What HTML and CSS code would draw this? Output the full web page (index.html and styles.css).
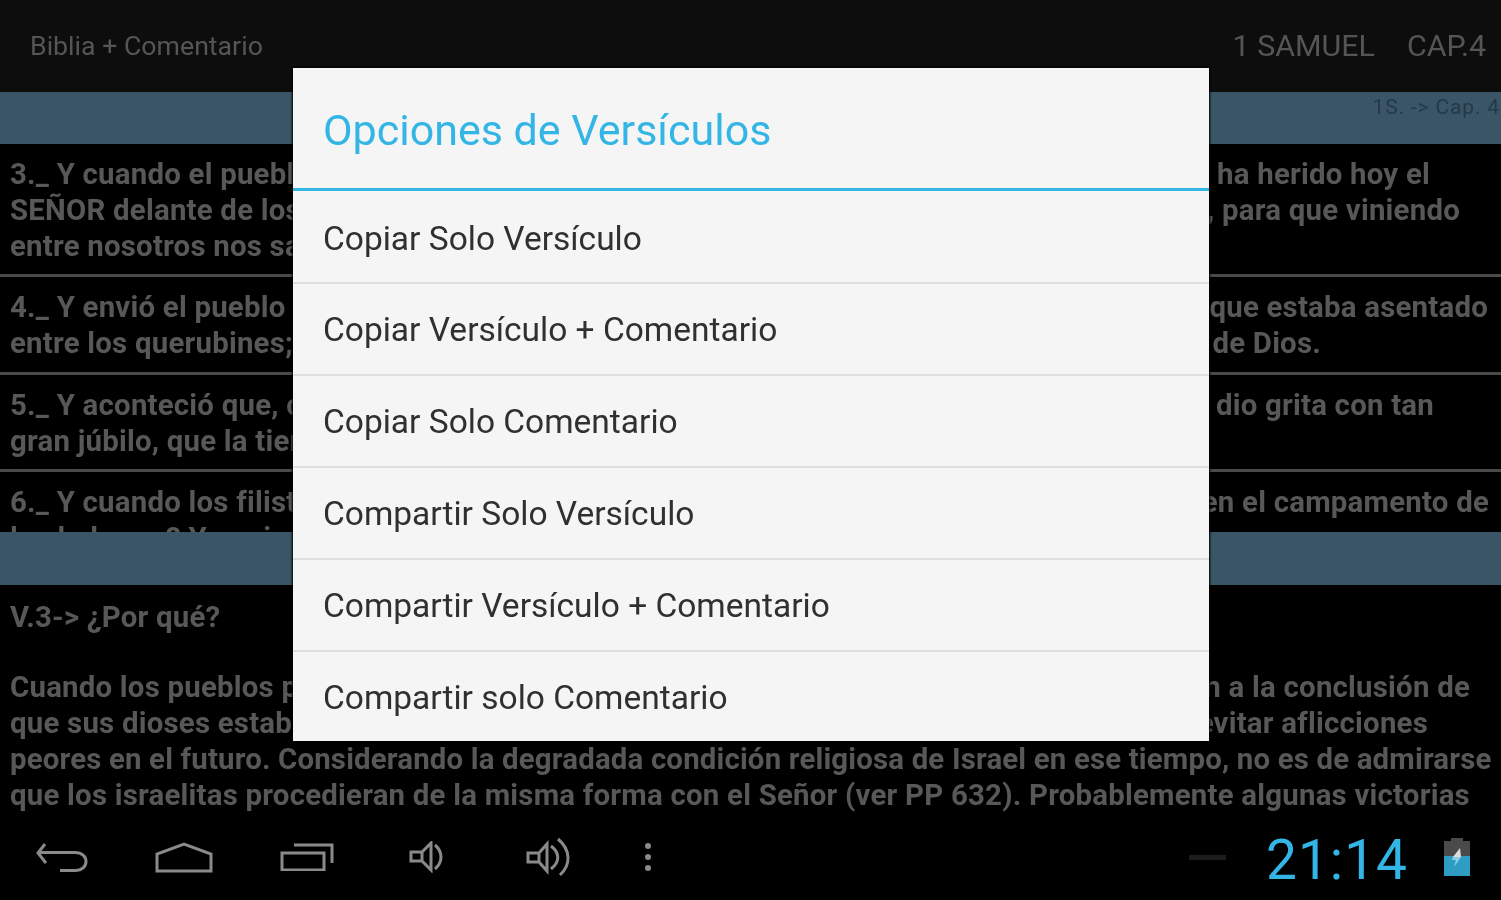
FILE: index.html
```html
<!DOCTYPE html>
<html lang="es">
<head>
<meta charset="utf-8">
<title>Biblia + Comentario</title>
<link rel="stylesheet" href="styles.css">
</head>
<body>
<div class="screen">
  <main class="app">
    <header class="topbar">
      <span class="app-title">Biblia + Comentario</span>
      <span class="book"><span>1 SAMUEL</span><span>CAP.4</span></span>
    </header>
    <div class="band band-top"><span class="band-ref">1S. -&gt; Cap. 4</span></div>
    <section class="verses">
      <article class="verse verse-3">
        <p class="line"><span>3._ Y cuando el pueblo volvió al campamento, los ancianos de Israel dijeron:</span><span>¿Por qué nos ha herido hoy el</span></p>
        <p class="line"><span>SEÑOR delante de los filisteos? Traigamos a nosotros de Silo el arca</span><span>del pacto, para que viniendo</span></p>
        <p class="line"><span>entre nosotros nos salve de la mano de nuestros enemigos.</span></p>
      </article>
      <article class="verse verse-4">
        <p class="line"><span>4._ Y envió el pueblo a Silo, y trajeron de allá el arca del pacto de Jehová</span><span>que estaba asentado</span></p>
        <p class="line"><span>entre los querubines; y los dos hijos de Elí estaban allí con el arca del pacto</span><span>de Dios.</span></p>
      </article>
      <article class="verse verse-5">
        <p class="line"><span>5._ Y aconteció que, cuando el arca del pacto llegó al campamento, todo Israel</span><span>dio grita con tan</span></p>
        <p class="line"><span>gran júbilo, que la tierra tembló.</span></p>
      </article>
      <article class="verse verse-6">
        <p class="line"><span>6._ Y cuando los filisteos oyeron la voz de júbilo, dijeron: ¿Qué voz de júbilo es esta</span><span>en el campamento de</span></p>
        <p class="line"><span>los hebreos? Y supieron que el arca de Jehová había venido al campamento.</span></p>
      </article>
    </section>
    <div class="band"></div>
    <section class="commentary">
      <p class="line comment-head"><span>V.3-&gt; ¿Por qué?</span></p>
      <p class="line"><span>Cuando los pueblos paganos sufrían una derrota, generalmente</span><span>llegaban a la conclusión de</span></p>
      <p class="line"><span>que sus dioses estaban enojados con ellos, y procuraban aplacarlos para</span><span>evitar aflicciones</span></p>
      <p class="line line-tight"><span>peores en el futuro. Considerando la degradada condición religiosa de Israel en ese tiempo, no es de admirarse</span></p>
      <p class="line"><span>que los israelitas procedieran de la misma forma con el Señor (ver PP 632). Probablemente algunas victorias</span></p>
    </section>
  </main>

  <nav class="navbar">
    <div class="nav-icons">
      <svg class="ico ico-back" viewBox="0 0 52 30"><path d="M9 2 2 11l8 10M2 10.500h37c7 0 11 4 11 9s-4 9-11 9H24"/></svg>
      <svg class="ico ico-home" viewBox="0 0 58 31"><path d="M2 29V12L29 2l27 10v17z"/></svg>
      <svg class="ico ico-recent" viewBox="0 0 54 28"><path d="M2 10h42v17H2zM14 2h38v18"/></svg>
      <svg class="ico ico-vol1" viewBox="0 0 36 32"><path d="M2 11h11l9-9v27l-9-9H2zM13 11v9M26 4c8 7 8 17 0 24"/></svg>
      <svg class="ico ico-vol2" viewBox="0 0 46 40"><path d="M2 16h11l8-9v27l-8-9H2zM13 16v9M25 9c9 7 9 16 0 23M32 2c13 11 13 26 2 36"/></svg>
      <span class="dots"><i></i><i></i><i></i></span>
    </div>
    <div class="status">
      <span class="dash"></span>
      <span class="clock">21:14</span>
      <svg class="battery" viewBox="0 0 26 38">
        <path class="bat-top" d="M7 0h12v3h7v15H0V3h7z"/>
        <path class="bat-fill" d="M0 18h26v20H0z"/>
        <path class="bat-bolt" d="M16 10 9 19h8z"/>
        <path class="bat-bolt-low" d="M9 19h8l-7 10 2-7H8z"/>
      </svg>
    </div>
  </nav>

  <div class="dialog" role="dialog">
    <h1 class="dialog-title">Opciones de Versículos</h1>
    <ul class="options">
      <li>Copiar Solo Versículo</li>
      <li>Copiar Versículo + Comentario</li>
      <li>Copiar Solo Comentario</li>
      <li>Compartir Solo Versículo</li>
      <li>Compartir Versículo + Comentario</li>
      <li>Compartir solo Comentario</li>
    </ul>
  </div>
</div>
</body>
</html>
```
FILE: styles.css
```css
* { box-sizing: border-box; }
html, body { margin: 0; padding: 0; background: #000; }
.screen {
  position: relative;
  width: 1501px;
  height: 900px;
  overflow: hidden;
  background: #000;
  font-family: Roboto, "Liberation Sans", sans-serif;
  filter: blur(0.7px);
  display: flex;
  flex-direction: column;
}
.app { height: 820px; overflow: hidden; flex: none; }
.topbar {
  height: 92px;
  background: #0d0d0d;
  display: flex;
  justify-content: space-between;
  align-items: center;
  padding: 0 15px 1px 30px;
  color: #555;
}
.app-title { font-size: 26.7px; }
.book { display: flex; gap: 32px; font-size: 30.4px; }
.band { height: 53px; background: #3a5565; }
.band-top { height: 52px; display: flex; justify-content: flex-end; }
.band-ref { font-size: 21px; color: #24394a; margin-top: 3px; margin-right: 1px; letter-spacing: 0.85px; white-space: nowrap; }
.verses { height: 388px; overflow: hidden; }
.verse { padding: 12px 10px 10px; border-bottom: 3px solid #4a4a4a; }
.verse-4 { padding-bottom: 11px; }
.line {
  margin: 0;
  height: 36px;
  line-height: 36px;
  font-size: 29.4px;
  letter-spacing: 0.22px;
  font-weight: 700;
  color: #585858;
  white-space: nowrap;
  display: flex;
  justify-content: space-between;
}
.line-tight { letter-spacing: 0.17px; }
.verse-3 .line:nth-child(1) { padding-right: 61px; }
.verse-3 .line:nth-child(2) { padding-right: 31px; }
.verse-4 .line:nth-child(1) { padding-right: 3px; }
.verse-4 .line:nth-child(2) { padding-right: 170px; }
.verse-5 .line:nth-child(1) { padding-right: 57px; }
.verse-6 .line:nth-child(1) { padding-right: 2px; }
.commentary { padding: 14px 10px 0; }
.commentary .line:nth-child(2) { padding-right: 21px; }
.commentary .line:nth-child(3) { padding-right: 63px; }
.comment-head { margin-bottom: 34px; }

.navbar {
  height: 80px;
  flex: none;
  display: flex;
  justify-content: space-between;
  align-items: center;
  background: #000;
  padding: 0 31px 6px 36px;
}
.nav-icons { display: flex; align-items: center; }
.ico { fill: none; stroke: #8a8a8a; stroke-width: 3; display: block; flex: none; }
.ico-back { width: 52px; height: 30px; margin-right: 67px; }
.ico-home { width: 58px; height: 31px; margin-right: 67px; }
.ico-recent { width: 54px; height: 28px; margin-right: 75px; }
.ico-vol1 { width: 36px; height: 32px; margin-right: 81px; }
.ico-vol2 { width: 46px; height: 40px; margin-right: 73px; }
.dots { display: flex; flex-direction: column; gap: 5px; }
.dots i { display: block; width: 6px; height: 6px; border-radius: 50%; background: #8a8a8a; }
.status { display: flex; align-items: center; }
.dash { width: 37px; height: 5px; background: #1c1c1c; margin-right: 40px; }
.clock { font-size: 55px; color: #33b5e5; margin-right: 36px; line-height: 1; letter-spacing: 1px; margin-top: 6px; }
.battery { width: 26px; height: 38px; }
.bat-top { fill: #4a4a4a; }
.bat-fill { fill: #2f9cc4; }
.bat-bolt { fill: #ddd; }
.bat-bolt-low { fill: #8ecde6; }

.dialog {
  position: absolute;
  left: 293px;
  top: 68px;
  width: 916px;
  background: #f5f5f5;
  box-shadow: 0 0 2px 1px #000;
}
.dialog-title {
  margin: 0;
  height: 123px;
  padding: 4px 30px 0;
  display: flex;
  align-items: center;
  font-size: 43px;
  font-weight: 400;
  color: #33b5e5;
  border-bottom: 3px solid #33b5e5;
}
.options { list-style: none; margin: 0; padding: 0; }
.options li {
  height: 92px;
  padding: 1px 30px 0;
  display: flex;
  align-items: center;
  font-size: 33.5px;
  color: #303030;
  border-bottom: 2px solid #dfdfdf;
}
.options li:first-child { height: 93px; padding-top: 3px; }
.options li:last-child { border-bottom: 0; height: 89px; }
```
